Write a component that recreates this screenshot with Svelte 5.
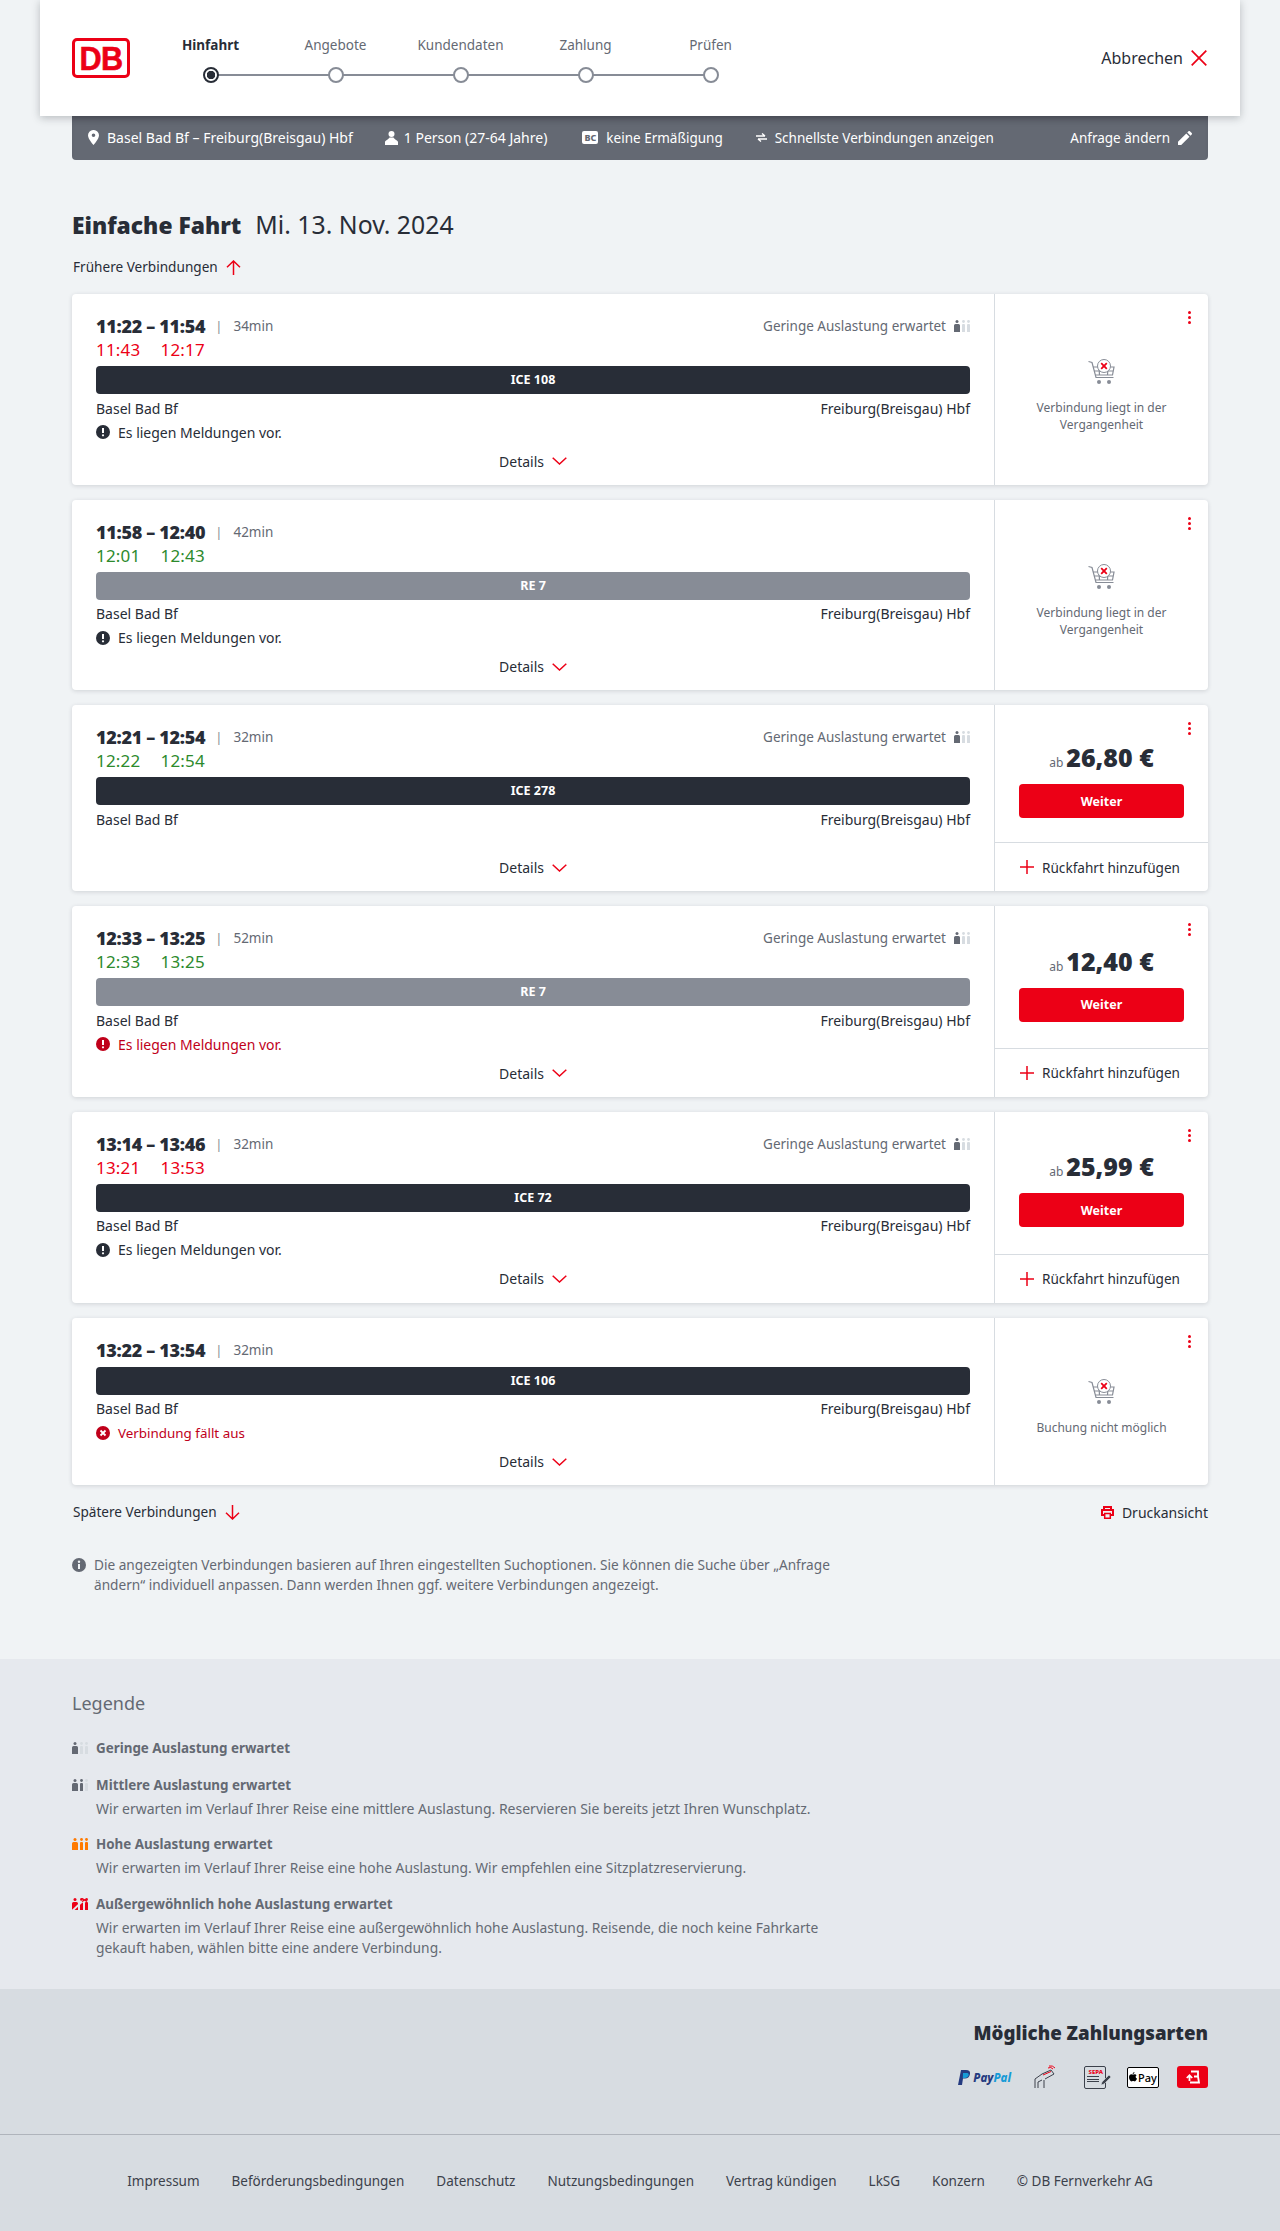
<script>
  const conns = [
    { t: '11:22 – 11:54', d: '34min', sub: ['11:43', '12:17'], late: true, load: true, train: 'ICE 108', kind: 'ice', note: 'info', panel: 'past' },
    { t: '11:58 – 12:40', d: '42min', sub: ['12:01', '12:43'], load: false, train: 'RE 7', kind: 're', note: 'info', panel: 'past' },
    { t: '12:21 – 12:54', d: '32min', sub: ['12:22', '12:54'], load: true, train: 'ICE 278', kind: 'ice', note: '', price: '26,80 €' },
    { t: '12:33 – 13:25', d: '52min', sub: ['12:33', '13:25'], load: true, train: 'RE 7', kind: 're', note: 'warn', price: '12,40 €' },
    { t: '13:14 – 13:46', d: '32min', sub: ['13:21', '13:53'], late: true, load: true, train: 'ICE 72', kind: 'ice', note: 'info', price: '25,99 €' },
    { t: '13:22 – 13:54', d: '32min', sub: null, load: false, train: 'ICE 106', kind: 'ice', note: 'cancel', panel: 'none' }
  ];
  const steps = ['Hinfahrt', 'Angebote', 'Kundendaten', 'Zahlung', 'Prüfen'];
  const links = ['Impressum', 'Beförderungsbedingungen', 'Datenschutz', 'Nutzungsbedingungen', 'Vertrag kündigen', 'LkSG', 'Konzern', '© DB Fernverkehr AG'];
</script>

{#snippet occ(a, b, c, s)}
  <svg class="occ" width="16" height="12" viewBox="0 0 16 12">
    <circle cx="3" cy="1.500" r="1.500" fill={a} /><path d="M0 5.500a1.500 1.500 0 0 1 1.500-1.500h3A1.500 1.500 0 0 1 6 5.500V12H0z" fill={a} />
    <circle cx="9.500" cy="1.500" r="1.400" fill={b} /><path d="M8 5a1 1 0 0 1 1-1h1a1 1 0 0 1 1 1V12H8z" fill={b} />
    <circle cx="14.500" cy="1.500" r="1.400" fill={c} /><path d="M13 5a1 1 0 0 1 1-1h1a1 1 0 0 1 1 1V12h-3z" fill={c} />
    {#if s}<path d="M0 13 15-1" stroke="#e6e9ee" stroke-width="2" /><path d="M10 .5 15 3.500M15 .5 10 3.500" stroke={a} stroke-width="1.400" />{/if}
  </svg>
{/snippet}

{#snippet cart()}
  <svg class="cart" width="27" height="26" viewBox="0 0 27 26" fill="none">
    <path d="M.5 2.500 4 3.500 8 18.500H25.500" stroke="#878c96" stroke-width="1.200" />
    <path d="M5 8H26L24.500 16H7.200M11 8 11.500 16M20 8 19.500 16M6 12H25.500" stroke="#878c96" stroke-width="1.200" />
    <circle cx="11" cy="23" r="2" fill="#878c96" /><circle cx="21" cy="23" r="2" fill="#878c96" />
    <circle cx="16" cy="7" r="6.500" fill="#fff" stroke="#878c96" />
    <path d="M13.200 4.200 18.800 9.800M18.800 4.200 13.200 9.800" stroke="#ec0016" stroke-width="1.800" />
  </svg>
{/snippet}

{#snippet noteIcon(kind)}
  <svg width="14" height="14" viewBox="0 0 14 14">
    <circle cx="7" cy="7" r="7" fill={kind === 'info' ? '#282d37' : '#c0001a'} />
    {#if kind === 'cancel'}
      <path d="M4.500 4.500 9.500 9.500M9.500 4.500 4.500 9.500" stroke="#fff" stroke-width="1.800" />
    {:else}
      <path d="M7 3V8" stroke="#fff" stroke-width="2" /><circle cx="7" cy="10.300" r="1.100" fill="#fff" />
    {/if}
  </svg>
{/snippet}

{#snippet chevron()}
  <svg width="15" height="8" viewBox="0 0 15 8" fill="none"><path d="M.7.7 7.500 7 14.300.7" stroke="#ec0016" stroke-width="1.500" /></svg>
{/snippet}

<header class="top">
  <div class="logo"><span>DB</span></div>
  <ol class="stepper">
    {#each steps as s, i}
      <li class="step" class:active={i === 0} class:last={i === 4}>
        <span class="step-label">{s}</span>
        <span class="step-dot"></span>
      </li>
    {/each}
  </ol>
  <div class="cancel">
    <span>Abbrechen</span>
    <svg width="16" height="16" viewBox="0 0 16 16" fill="none"><path d="M.7.7 15.300 15.300M15.300.7.7 15.300" stroke="#ec0016" stroke-width="1.700" /></svg>
  </div>
</header>

<div class="query">
  <div class="q q1">
    <svg width="11" height="15" viewBox="0 0 11 15"><path fill-rule="evenodd" d="M5.500 0A5.300 5.300 0 0 1 11 5.200C11 9 5.500 15 5.500 15S0 9 0 5.200A5.300 5.300 0 0 1 5.500 0Zm0 3.500a1.800 1.800 0 1 0 0 3.600 1.800 1.800 0 0 0 0-3.600Z" fill="#fff" /></svg>
    <span>Basel Bad Bf – Freiburg(Breisgau) Hbf</span>
  </div>
  <div class="q q2">
    <svg width="13" height="14" viewBox="0 0 13 14"><circle cx="6.500" cy="3" r="3" fill="#fff" /><path d="M4.500 6.500h4c1 2 4.500 3 4.500 4.500v3H0v-3c0-1.500 3.500-2.500 4.500-4.500Z" fill="#fff" /></svg>
    <span>1 Person (27-64 Jahre)</span>
  </div>
  <div class="q q3">
    <span class="bc">BC</span>
    <span>keine Ermäßigung</span>
  </div>
  <div class="q q4">
    <svg width="11" height="9" viewBox="0 0 11 9" fill="none"><path d="M0 3H9M6 .5 9 3M11 6H2M5 8.500 2 6" stroke="#fff" stroke-width="1.400" /></svg>
    <span>Schnellste Verbindungen anzeigen</span>
  </div>
  <div class="q q5">
    <span>Anfrage ändern</span>
    <svg width="14" height="14" viewBox="0 0 14 14"><path d="M0 14V10.800L8.300 2.500l3.200 3.200L3.200 14ZM9.300 1.500 10.500.3a1 1 0 0 1 1.400 0l1.800 1.800a1 1 0 0 1 0 1.400L12.500 4.700Z" fill="#fff" /></svg>
  </div>
</div>

<main class="content">
  <h1><b>Einfache Fahrt</b><span>Mi. 13. Nov. 2024</span></h1>
  <div class="more up">
    <span>Frühere Verbindungen</span>
    <svg width="15" height="15" viewBox="0 0 15 15" fill="none"><path d="M7.500 15V1M1 7.300 7.500 1 14 7.300" stroke="#ec0016" stroke-width="1.500" /></svg>
  </div>

  <div class="list">
    {#each conns as c}
      <article class="card">
        <div class="left">
          <div class="row-time" class:nosub={!c.sub}>
            <strong>{c.t}</strong>
            <i class="sep">|</i>
            <span class="dur">{c.d}</span>
            {#if c.load}
              <span class="load">Geringe Auslastung erwartet {@render occ('#646973', '#d7dce1', '#d7dce1')}</span>
            {/if}
          </div>
          {#if c.sub}
            <div class="row-sub" class:late={c.late}><span>{c.sub[0]}</span><span>{c.sub[1]}</span></div>
          {/if}
          <div class="bar {c.kind}">{c.train}</div>
          <div class="stations"><span>Basel Bad Bf</span><span>Freiburg(Breisgau) Hbf</span></div>
          {#if c.note === 'info'}
            <div class="note">{@render noteIcon('info')}<span>Es liegen Meldungen vor.</span></div>
          {:else if c.note === 'warn'}
            <div class="note red">{@render noteIcon('warn')}<span>Es liegen Meldungen vor.</span></div>
          {:else if c.note === 'cancel'}
            <div class="note red cancelled">{@render noteIcon('cancel')}<span>Verbindung fällt aus</span></div>
          {:else}
            <div class="note-space"></div>
          {/if}
          <div class="details"><span>Details</span>{@render chevron()}</div>
        </div>
        <aside class="right">
          <span class="dots"><i></i><i></i><i></i></span>
          {#if c.price}
            <div class="buy">
              <div class="price"><small>ab</small><b>{c.price}</b></div>
              <button class="go">Weiter</button>
            </div>
            <div class="ret">
              <svg width="14" height="14" viewBox="0 0 14 14" fill="none"><path d="M7 0V14M0 7H14" stroke="#ec0016" stroke-width="1.500" /></svg>
              <span>Rückfahrt hinzufügen</span>
            </div>
          {:else}
            <div class="na">
              {@render cart()}
              <p>{c.panel === 'past' ? 'Verbindung liegt in der Vergangenheit' : 'Buchung nicht möglich'}</p>
            </div>
          {/if}
        </aside>
      </article>
    {/each}
  </div>

  <div class="after">
    <div class="more">
      <span>Spätere Verbindungen</span>
      <svg width="15" height="15" viewBox="0 0 15 15" fill="none"><path d="M7.500 0V14M1 7.700 7.500 14 14 7.700" stroke="#ec0016" stroke-width="1.500" /></svg>
    </div>
    <div class="print">
      <svg width="13" height="13" viewBox="0 0 13 13" fill="none"><path d="M3 3V1h7v2M3 9H1V4h11v5h-2" stroke="#ec0016" stroke-width="2" /><path d="M3.700 7.500h5.600v4.700H3.700z" stroke="#ec0016" stroke-width="1.500" /></svg>
      <span>Druckansicht</span>
    </div>
  </div>

  <div class="hint">
    <svg width="14" height="14" viewBox="0 0 14 14"><circle cx="7" cy="7" r="7" fill="#646973" /><circle cx="7" cy="3.700" r="1.200" fill="#f0f3f5" /><path d="M7 6V11" stroke="#f0f3f5" stroke-width="2" /></svg>
    <p>Die angezeigten Verbindungen basieren auf Ihren eingestellten Suchoptionen. Sie können die Suche über „Anfrage ändern“ individuell anpassen. Dann werden Ihnen ggf. weitere Verbindungen angezeigt.</p>
  </div>
</main>

<section class="legend">
  <h2>Legende</h2>
  <div class="lg lg1">
    {@render occ('#646973', '#d7dce1', '#d7dce1')}
    <div><b>Geringe Auslastung erwartet</b></div>
  </div>
  <div class="lg lg2">
    {@render occ('#646973', '#646973', '#d7dce1')}
    <div><b>Mittlere Auslastung erwartet</b><p>Wir erwarten im Verlauf Ihrer Reise eine mittlere Auslastung. Reservieren Sie bereits jetzt Ihren Wunschplatz.</p></div>
  </div>
  <div class="lg lg3">
    {@render occ('#ff7a00', '#ff7a00', '#ff7a00')}
    <div><b>Hohe Auslastung erwartet</b><p>Wir erwarten im Verlauf Ihrer Reise eine hohe Auslastung. Wir empfehlen eine Sitzplatzreservierung.</p></div>
  </div>
  <div class="lg lg4">
    {@render occ('#ec0016', '#ec0016', '#ec0016', true)}
    <div><b>Außergewöhnlich hohe Auslastung erwartet</b><p>Wir erwarten im Verlauf Ihrer Reise eine außergewöhnlich hohe Auslastung. Reisende, die noch keine Fahrkarte gekauft haben, wählen bitte eine andere Verbindung.</p></div>
  </div>
</section>

<section class="pay">
  <h2>Mögliche Zahlungsarten</h2>
  <div class="pay-icons">
    <span class="pp"><svg width="13" height="15" viewBox="0 0 13 15"><path d="M3 0h5c3 0 4.500 1.500 4 4-.5 3-2.500 4.500-5 4.500H5L4 15H0Z" fill="#253b80" /><path d="M5 3h4c1.500 0 2 1 1.500 2.500S8.500 8 7 8H4.800Z" fill="#179bd7" /></svg><b><em>Pay</em>Pal</b></span>
    <svg class="ic-hand" width="22" height="24" viewBox="0 0 22 24" fill="none" stroke="#3c414b" stroke-width="1"><path d="M1 23V14L8 9 17 5 20 9 11 14M4 23V17L8 15M10 23V15" /><path d="M9 10 17 6.500M14 3a4 4 0 0 1 5 1M15 1a6 6 0 0 1 6 2" stroke="#ec0016" /></svg>
    <span class="sepa"><span class="sepa-t">SEPA</span><i></i><i></i><i></i>
      <svg width="12" height="12" viewBox="0 0 12 12" fill="#3c414b"><path d="M1 11 2 8 9 1l2 2-7 7Z" stroke="#d7dce1" stroke-width=".6" /></svg>
    </span>
    <span class="apple"><svg width="8" height="10" viewBox="0 0 8 10"><path d="M5.500 0c0 1-.8 2-1.800 2C3.700 1 4.500.2 5.500 0ZM4 2.600c.5 0 1-.4 1.800-.4.700 0 1.400.4 1.800 1-1.400.9-1.200 2.800.4 3.400-.4 1.100-1.200 2.800-2.200 2.800-.7 0-.9-.4-1.700-.4s-1 .4-1.700.4C1.400 9.400 0 7 0 5.200 0 3.400 1.200 2.300 2.300 2.300c.7 0 1.300.3 1.700.3Z" fill="#000" /></svg>Pay</span>
    <span class="red3"><svg width="16" height="14" viewBox="0 0 16 14" fill="none" stroke="#fff" stroke-width="1.800"><path d="M6 1.500H13V6.500H9M13 6.500 14 12.500H5" /><path d="M4.500 11V5.500M1.800 8 4.500 5.200 7.200 8" /></svg></span>
  </div>
</section>

<footer class="foot">
  {#each links as l}<span>{l}</span>{/each}
</footer>

<style>
  :global(body) {
    margin: 0;
    background: #f0f3f5;
    font-family: "Noto Sans", sans-serif;
    font-size: 14px;
    color: #282d37;
  }
  * { box-sizing: border-box; }
  .top {
    position: relative;
    z-index: 2;
    display: flex;
    align-items: center;
    width: 1200px;
    height: 116px;
    margin: 0 auto;
    padding: 0 33px 0 32px;
    background: #fff;
    box-shadow: 0 2px 8px rgba(40, 45, 55, .28);
  }
  .logo {
    width: 58px;
    height: 40px;
    border: 3px solid #ec0016;
    border-radius: 5px;
    background: #fff;
    display: flex;
    align-items: center;
    justify-content: center;
    color: #ec0016;
    font-family: "Liberation Sans", sans-serif;
    font-weight: 700;
    font-size: 34px;
    letter-spacing: -.5px;
    -webkit-text-stroke: .6px #ec0016;
  }
  .logo span { transform: scaleX(.9); }
  .stepper {
    list-style: none;
    display: flex;
    margin: 0 0 0 18px;
    padding: 0;
  }
  .step {
    position: relative;
    width: 125px;
    height: 48px;
    margin-top: 2px;
    display: flex;
    flex-direction: column;
    align-items: center;
    justify-content: space-between;
    color: #646973;
    font-size: 13.500px;
    line-height: 20px;
  }
  .step:not(.last)::after {
    content: "";
    position: absolute;
    left: 62.500px;
    right: -62.500px;
    bottom: 7px;
    height: 2px;
    background: #878c96;
  }
  .step-dot {
    position: relative;
    z-index: 1;
    width: 16px;
    height: 16px;
    border: 2px solid #878c96;
    border-radius: 50%;
    background: #fff;
  }
  .active { color: #282d37; font-weight: 700; }
  .active .step-dot {
    border-color: #282d37;
    background: radial-gradient(circle, #282d37 0 4px, #fff 4.500px);
  }
  .cancel {
    margin-left: auto;
    display: flex;
    align-items: center;
    gap: 8px;
    font-size: 16px;
  }
  .query {
    display: flex;
    align-items: center;
    width: 1136px;
    height: 44px;
    margin: 0 auto;
    padding: 0 16px;
    background: #646973;
    border-radius: 0 0 4px 4px;
    color: #fff;
    font-size: 13.500px;
    box-shadow: inset 0 6px 6px -4px rgba(30, 30, 40, .35);
  }
  .q { display: flex; align-items: center; gap: 8px; white-space: nowrap; padding-bottom: 1px; }
  .q1, .q2 { font-size: 14px; }
  .q2 { margin-left: 32px; gap: 6px; }
  .q3 { margin-left: 35px; }
  .q4 { margin-left: 33px; }
  .q5 { margin-left: auto; }
  .bc {
    width: 16px;
    height: 13px;
    border-radius: 2px;
    background: #fff;
    color: #646973;
    font-size: 9px;
    font-weight: 800;
    line-height: 13px;
    text-align: center;
  }
  .content { width: 1136px; margin: 0 auto; }
  h1 {
    height: 34px;
    margin: 47px 0 0;
    font-size: 24.800px;
    font-weight: 400;
    line-height: 34px;
    white-space: nowrap;
  }
  h1 b { font-size: 22.800px; font-weight: 900; margin-right: 14px; }
  .more { display: flex; align-items: center; gap: 8px; padding-left: 1px; line-height: 20px; font-size: 13.600px; }
  .up { margin-top: 16px; margin-bottom: 17px; }
  .list { display: flex; flex-direction: column; gap: 15px; }
  .card {
    display: flex;
    background: #fff;
    border-radius: 4px;
    box-shadow: 0 1px 4px rgba(40, 45, 55, .16);
  }
  .left { flex: 1; min-width: 0; padding: 20px 24px 13.600px; }
  .row-time { display: flex; align-items: center; height: 24px; }
  .nosub { margin-bottom: 5px; }
  .row-time strong { font-size: 18px; font-weight: 900; letter-spacing: -.3px; white-space: nowrap; }
  .sep { font-style: normal; color: #878c96; margin: 0 11px 0 10px; font-size: 13px; }
  .dur { color: #646973; font-size: 13.500px; }
  .load { margin-left: auto; display: flex; align-items: center; gap: 8px; color: #646973; white-space: nowrap; font-size: 13.500px; }
  .row-sub { display: flex; gap: 20px; height: 24px; margin-bottom: 4px; line-height: 24px; font-size: 17px; letter-spacing: .2px; color: #2d8a2d; }
  .late { color: #ec0016; }
  .bar {
    height: 28px;
    border-radius: 4px;
    color: #fff;
    font-size: 12.500px;
    font-weight: 700;
    line-height: 28px;
    text-align: center;
  }
  .ice { background: #282d37; }
  .re { background: #878c96; }
  .stations { display: flex; justify-content: space-between; height: 28px; align-items: center; }
  .note { display: flex; align-items: center; gap: 8px; height: 20px; }
  .note.red { color: #c0001a; }
  .cancelled span { font-size: 13.400px; }
  .note-space { height: 15.600px; }
  .details { display: flex; align-items: center; justify-content: center; gap: 8px; height: 20px; margin-top: 9px; }
  .right {
    position: relative;
    width: 214px;
    flex: none;
    display: flex;
    flex-direction: column;
    border-left: 1px solid #d7dce1;
  }
  .dots {
    position: absolute;
    top: 17px;
    right: 17px;
    display: flex;
    flex-direction: column;
    gap: 2px;
  }
  .dots i { width: 3px; height: 3px; border-radius: 50%; background: #ec0016; }
  .buy {
    flex: 1;
    display: flex;
    flex-direction: column;
    justify-content: center;
    padding: 13px 24px 0;
  }
  .price {
    height: 30px;
    display: flex;
    align-items: baseline;
    justify-content: center;
    gap: 3px;
    margin-bottom: 12px;
    line-height: 30px;
  }
  .price small { font-size: 12px; color: #646973; }
  .price b { font-size: 25px; font-weight: 900; }
  .go {
    width: 165px;
    height: 34px;
    border: 0;
    border-radius: 4px;
    background: #ec0016;
    color: #fff;
    font: 700 12.500px "Noto Sans", sans-serif;
  }
  .ret {
    height: 49px;
    display: flex;
    align-items: center;
    gap: 8px;
    padding-left: 25px;
    border-top: 1px solid #d7dce1;
    white-space: nowrap;
    font-size: 13.600px;
  }
  .na {
    flex: 1;
    display: flex;
    flex-direction: column;
    align-items: center;
    justify-content: center;
    gap: 14px;
    padding: 13px 24px 0;
    text-align: center;
  }
  .na p { margin: 0; color: #646973; font-size: 12px; line-height: 17px; }
  .cart { display: block; }
  .after { display: flex; justify-content: space-between; align-items: center; margin-top: 17px; }
  .print { display: flex; align-items: center; gap: 8px; }
  .hint { display: flex; gap: 8px; width: 780px; margin-top: 33px; color: #646973; line-height: 20px; font-size: 13.650px; }
  .hint svg { flex: none; margin-top: 3px; }
  .hint p { margin: 0; }
  .legend {
    margin-top: 64px;
    height: 330px;
    padding: 30px 72px 0;
    background: #e6e9ee;
    color: #646973;
  }
  .legend h2 { margin: 0 0 21px; font-size: 18px; font-weight: 400; line-height: 28px; }
  .lg { display: flex; gap: 8px; width: 770px; margin-bottom: 15px; }
  .lg1 { margin-bottom: 16.500px; }
  .lg3 { margin-bottom: 16px; }
  .lg .occ { flex: none; margin-top: 4px; }
  .lg b { display: block; line-height: 20px; font-weight: 700; font-size: 13.400px; }
  .lg p { margin: 4px 0 0; line-height: 20px; }
  .lg3 p, .lg4 p { font-size: 13.800px; }
  .pay {
    height: 146px;
    padding: 30px 72px 0;
    background: #d7dce1;
    border-bottom: 1px solid #afb4bb;
    text-align: right;
  }
  .pay h2 { margin: 0; font-size: 18.700px; font-weight: 900; line-height: 28px; }
  .pay-icons { display: flex; justify-content: flex-end; align-items: center; height: 24px; margin-top: 18px; }
  .pp { display: flex; align-items: center; gap: 2px; font-size: 11.500px; color: #179bd7; font-style: italic; }
  .pp b { font-weight: 800; }
  .pp em { color: #253b80; font-style: italic; }
  .ic-hand { margin-left: 23px; }
  .sepa {
    position: relative;
    width: 22px;
    height: 23px;
    margin-left: 28px;
    margin-right: 5px;
    padding: 2px;
    border: 1px solid #3c414b;
    border-radius: 2px;
    display: flex;
    flex-direction: column;
    gap: 1.500px;
  }
  .sepa-t { color: #ec0016; font-size: 6px; font-weight: 800; line-height: 6px; }
  .sepa i { display: block; width: 12px; height: 1px; background: #3c414b; }
  .sepa svg { position: absolute; right: -7px; bottom: 2px; }
  .apple {
    width: 32px;
    height: 21px;
    margin-left: 16px;
    border: 1px solid #000;
    border-radius: 2px;
    background: #fff;
    display: flex;
    align-items: center;
    justify-content: center;
    gap: 1px;
    color: #000;
    font-size: 11px;
    font-weight: 500;
  }
  .red3 {
    width: 31px;
    height: 22px;
    margin-left: 18px;
    border-radius: 3px;
    background: #ec0016;
    display: flex;
    align-items: center;
    justify-content: center;
  }
  .foot {
    height: 97px;
    display: flex;
    align-items: center;
    justify-content: center;
    gap: 32px;
    padding-bottom: 5px;
    background: #d7dce1;
    color: #3c414b;
    white-space: nowrap;
    font-size: 13.500px;
  }
</style>
